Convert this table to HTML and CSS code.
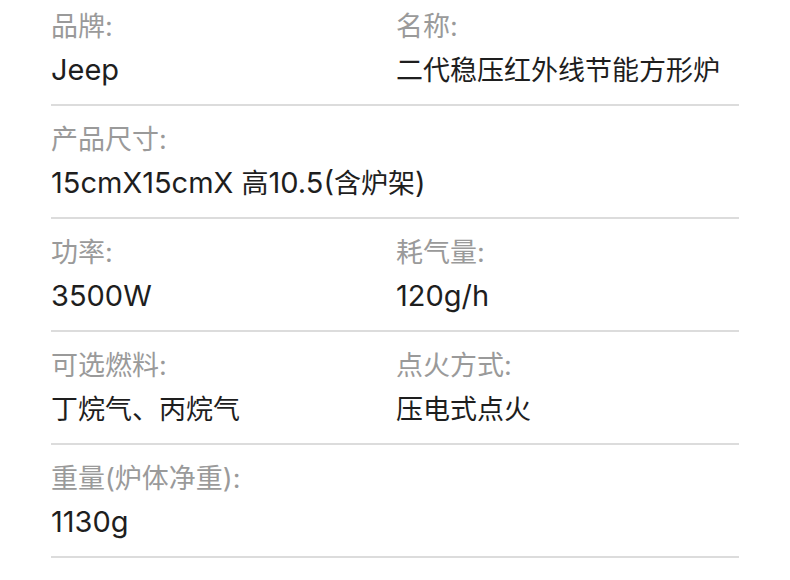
FILE: index.html
```html
<!DOCTYPE html>
<html>
	<head>
		<meta charset="utf-8">
		<title>产品参数</title>
		<link rel="stylesheet" href="styles.css">
	</head>
	<body>
		<div class="specs">
			<div class="row">
				<div class="item">
					<div class="label">品牌:</div>
					<div class="value"><span class="en">Jeep</span></div>
				</div>
				<div class="item">
					<div class="label">名称:</div>
					<div class="value">二代稳压红外线节能方形炉</div>
				</div>
			</div>
			<div class="row">
				<div class="item">
					<div class="label">产品尺寸:</div>
					<div class="value"><span class="en">15cmX15cmX </span>高<span class="en">10.5(</span>含炉架<span class="en">)</span></div>
				</div>
			</div>
			<div class="row">
				<div class="item">
					<div class="label">功率:</div>
					<div class="value"><span class="en">3500W</span></div>
				</div>
				<div class="item">
					<div class="label">耗气量:</div>
					<div class="value"><span class="en">120g/h</span></div>
				</div>
			</div>
			<div class="row">
				<div class="item">
					<div class="label">可选燃料:</div>
					<div class="value">丁烷气、丙烷气</div>
				</div>
				<div class="item">
					<div class="label">点火方式:</div>
					<div class="value">压电式点火</div>
				</div>
			</div>
			<div class="row">
				<div class="item">
					<div class="label">重量(炉体净重):</div>
					<div class="value"><span class="en">1130g</span></div>
				</div>
			</div>
		</div>
	</body>
</html>
```

FILE: styles.css
```css
body{
	margin: 0;
	background-color: #fff;
	font-family: Inter, "Noto Sans CJK SC", sans-serif;
}
.specs{
	width: 688px;
	margin-left: 51px;
}
.row{
	display: grid;
	grid-template-columns: 345px 1fr;
	padding: 14px 0 9px;
	border-bottom: 2px solid #dcdcdc;
}
.row:first-child{padding-top: 7px;}
.item:only-child{grid-column: 1 / -1;}
.label{
	font-size: 27px;
	line-height: 40px;
	color: #9a9a9a;
}
.value{
	font-size: 27px;
	line-height: 48px;
	color: #1e1e1e;
}
.value .en{
	font-size: 29px;
	line-height: 1;
}
```
